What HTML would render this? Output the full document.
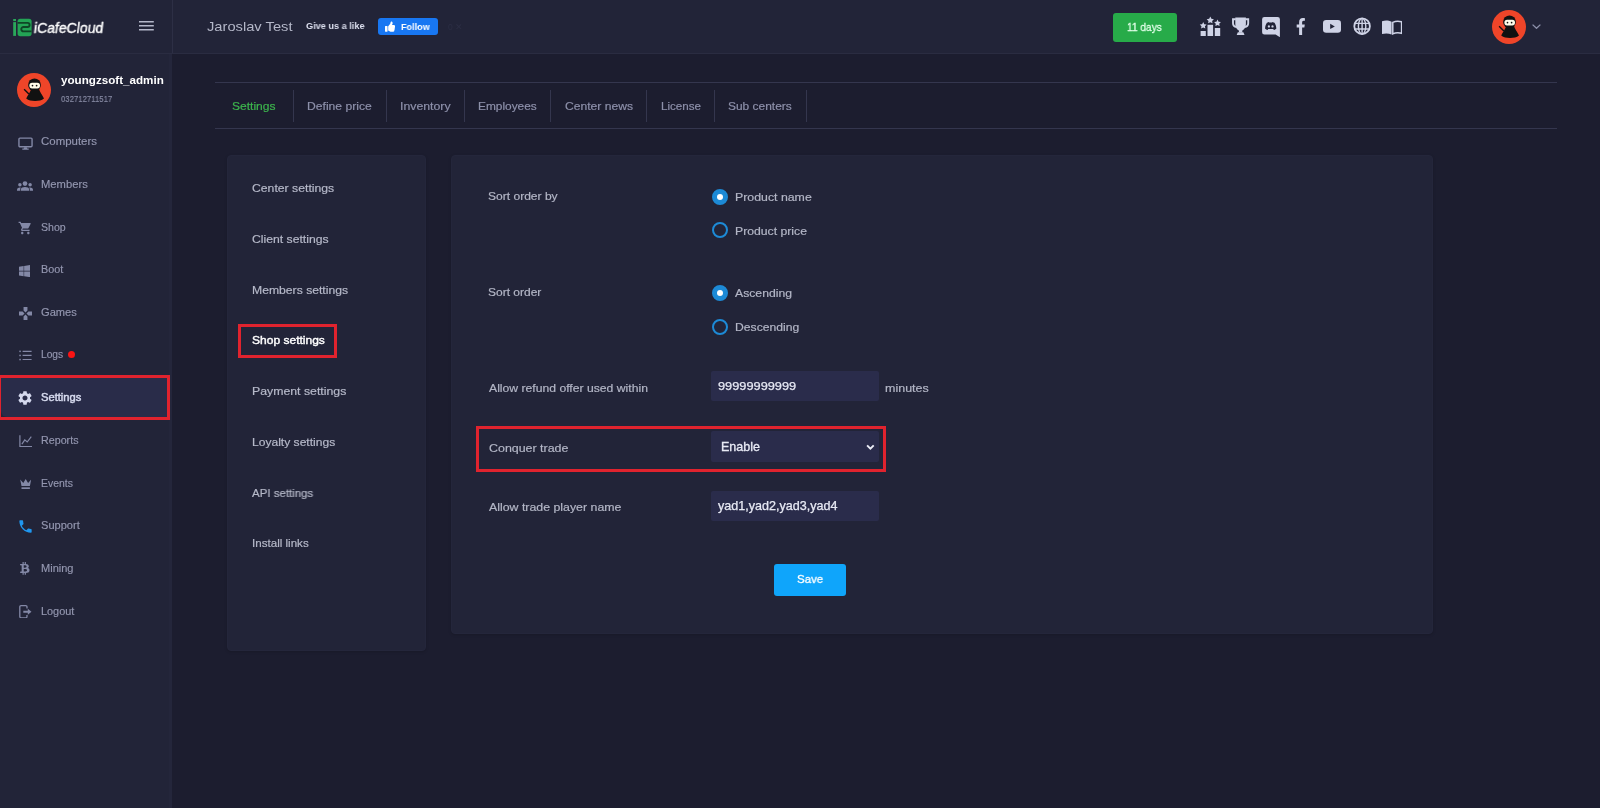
<!DOCTYPE html>
<html lang="en">
<head>
<meta charset="utf-8">
<title>iCafeCloud - Shop settings</title>
<style>
*{box-sizing:border-box;margin:0;padding:0}
html,body{width:1600px;height:808px;overflow:hidden}
body{background:#1c1d2f;font-family:"Liberation Sans",sans-serif;color:#b3b6c6;font-size:12px;position:relative}
.abs{position:absolute}
.t{position:absolute;white-space:nowrap;line-height:normal;transform-origin:0 50%;display:block;will-change:transform}
header{position:absolute;left:0;top:0;width:1600px;height:54px;background:#222438;border-bottom:1px solid #2a2c41}
main{position:absolute;left:0;top:0;width:0;height:0}
ul{list-style:none}
aside{position:absolute;left:0;top:0;width:172px;height:808px;background:#222438;border-right:3px solid #24263b}
.panel{position:absolute;background:#222438;border-radius:4px;box-shadow:0 1px 3px rgba(0,0,0,.15);border:1px solid #24263b}
.hl{position:absolute;border:3px solid #e0232e}
.inp{position:absolute;background:#2a2c4b;border-radius:2px}
.rad{position:absolute;width:16px;height:16px;border-radius:50%;border:2px solid #1d8ad6}
.rad.on{background:#1d8ad6}
.rad.on::after{content:"";position:absolute;left:3px;top:3px;width:6px;height:6px;border-radius:50%;background:#fff}
.sep{position:absolute;width:1px;background:#34364e;top:90px;height:32px}
</style>
</head>
<body>
<aside>
<div id="user"><svg class="abs" style="left:17.299999999999997px;top:73px" width="34" height="34" viewBox="0 0 34 34" ><circle cx="17" cy="17" r="17" fill="#ef4529"/><path d="M7.100 16.300l4.800 4.600" stroke="#111" stroke-width="1.400"/><circle cx="17.500" cy="11.900" r="6.400" fill="#111"/><path d="M14.300 15.500C13.800 18.500 11 21.500 9.200 25.600 11.500 27.400 14.500 28 18.100 28S24.700 27.400 27 25.600C25.200 21.500 22.400 18.500 21.900 15.500z" fill="#111"/><rect x="12.400" y="9.700" width="10.600" height="5.700" rx="2.700" fill="#fffbe8"/><circle cx="15.500" cy="12.600" r=".85" fill="#111"/><circle cx="19.600" cy="12.600" r=".85" fill="#111"/></svg><span class="t" style="left:61.25px;top:74px;font-size:11.2px;color:#ffffff;transform:scaleX(1.0397);font-weight:700">youngzsoft_admin</span><span class="t" style="left:61.25px;top:93px;font-size:9.6px;color:#878aa3;transform:scaleX(0.8093);-webkit-text-stroke:0.2px #878aa3">032712711517</span></div>
<div class="abs" style="left:1px;top:378px;width:166px;height:39px;background:#292c49;border-radius:0 0 0 6px"></div>
<ul id="menu"><li><svg class="abs" style="left:17.5px;top:136.5px" width="15" height="13" viewBox="0 0 15 13" ><rect x=".950" y="1.100" width="13.100" height="8.700" rx="1" fill="none" stroke="#8388a6" stroke-width="1.400"/><path fill="#8388a6" d="M6.300 10.300h2.400l.500 1.300h1.500v1.100H4.300v-1.100h1.500z"/></svg><span class="t" style="left:41.25px;top:136px;font-size:10.2px;color:#9497b0;transform:scaleX(1.1239);-webkit-text-stroke:0.15px #9497b0">Computers</span></li><li><svg class="abs" style="left:17px;top:180.8px" width="16" height="10" viewBox="0 0 16 10" ><g fill="#8388a6"><circle cx="8" cy="2.600" r="2.350"/><circle cx="2.900" cy="3.700" r="1.750"/><circle cx="13.100" cy="3.700" r="1.750"/><path d="M3.900 9.800V8.600C3.900 7.500 4.500 6.800 5.300 6.500 6.100 6.100 7 5.900 8 5.900s1.900.200 2.700.600c.800.300 1.400 1 1.400 2.100V9.800z"/><path d="M0 9.800V8.700C0 7.900.400 7.300 1 7c.600-.300 1.200-.500 1.900-.500.300 0 .600 0 .900.100-.400.600-.600 1.300-.600 2V9.800z"/><path d="M16 9.800V8.700c0-.800-.400-1.400-1-1.700-.600-.300-1.200-.500-1.900-.500-.300 0-.600 0-.900.100.400.600.600 1.300.600 2V9.800z"/></g></svg><span class="t" style="left:41.25px;top:179px;font-size:10.2px;color:#9497b0;transform:scaleX(1.1008);-webkit-text-stroke:0.15px #9497b0">Members</span></li><li><svg class="abs" style="left:17.5px;top:221.3px" width="14.6" height="13.8" viewBox="0 1 24 22" preserveAspectRatio="none"><path fill="#8388a6" d="M7 18c-1.100 0-1.990.900-1.990 2S5.900 22 7 22s2-.900 2-2-.900-2-2-2zM1 2v2h2l3.600 7.590-1.350 2.450c-.160.280-.250.610-.250.960 0 1.100.900 2 2 2h12v-2H7.420c-.140 0-.250-.110-.250-.250l.030-.120.900-1.630h7.450c.750 0 1.410-.410 1.750-1.030l3.580-6.490c.080-.140.120-.310.120-.480 0-.550-.450-1-1-1H5.210l-.940-2H1zm16 16c-1.100 0-1.990.900-1.990 2s.890 2 1.990 2 2-.900 2-2-.900-2-2-2z"/></svg><span class="t" style="left:41.25px;top:222px;font-size:10.2px;color:#9497b0;transform:scaleX(1.0401);-webkit-text-stroke:0.15px #9497b0">Shop</span></li><li><svg class="abs" style="left:19px;top:264.7px" width="11.3" height="12.2" viewBox="0 32 448 448" preserveAspectRatio="none"><path fill="#8388a6" d="M0 93.700l183.600-25.300v177.400H0V93.700zm0 324.600l183.600 25.300V268.400H0v149.900zm203.800 28L448 480V268.400H203.800v177.900zm0-380.600v180.100H448V32L203.800 65.700z"/></svg><span class="t" style="left:41.25px;top:264px;font-size:10.2px;color:#9497b0;transform:scaleX(1.0611);-webkit-text-stroke:0.15px #9497b0">Boot</span></li><li><svg class="abs" style="left:18.7px;top:306.8px" width="13" height="13" viewBox="2 2 20 20" ><path fill="#8388a6" d="M15 7.500V2H9v5.500l3 3 3-3zM7.500 9H2v6h5.500l3-3-3-3zM9 16.500V22h6v-5.500l-3-3-3 3zM16.500 9l-3 3 3 3H22V9h-5.500z"/></svg><span class="t" style="left:41.25px;top:307px;font-size:10.2px;color:#9497b0;transform:scaleX(1.0915);-webkit-text-stroke:0.15px #9497b0">Games</span></li><li><svg class="abs" style="left:18.5px;top:349.9px" width="13" height="11" viewBox="0 0 13 11" ><g stroke="#8388a6" stroke-width="1.200" fill="none"><path d="M3.600 1.300h9M3.600 5.400h9M3.600 9.500h9"/></g><g fill="#8388a6"><rect x=".300" y=".600" width="1.500" height="1.500"/><rect x=".300" y="4.700" width="1.500" height="1.500"/><rect x=".300" y="8.800" width="1.500" height="1.500"/></g></svg><span class="t" style="left:41.25px;top:349px;font-size:10.2px;color:#9497b0;transform:scaleX(1.0025);-webkit-text-stroke:0.15px #9497b0">Logs</span></li><li><svg class="abs" style="left:18.2px;top:391.2px" width="14" height="14" viewBox="2 2 20 20" ><path fill="#d5d9ee" d="M19.140 12.940c.040-.300.060-.610.060-.940 0-.320-.020-.640-.070-.940l2.030-1.580c.180-.140.230-.410.120-.610l-1.920-3.320c-.120-.220-.370-.290-.590-.220l-2.390.960c-.500-.380-1.030-.700-1.620-.940l-.360-2.540c-.040-.240-.240-.410-.480-.410h-3.840c-.240 0-.430.170-.470.410l-.360 2.540c-.590.240-1.130.570-1.620.940l-2.390-.960c-.220-.080-.470 0-.590.220L2.740 8.870c-.120.210-.080.470.120.610l2.030 1.580c-.050.300-.090.630-.090.940s.020.640.070.940l-2.030 1.580c-.180.140-.230.410-.120.610l1.920 3.320c.120.220.370.290.590.220l2.390-.960c.500.380 1.030.700 1.620.940l.360 2.540c.050.240.240.410.480.410h3.840c.240 0 .440-.170.470-.410l.360-2.540c.590-.240 1.130-.560 1.620-.940l2.390.960c.220.080.470 0 .590-.220l1.920-3.320c.120-.220.070-.470-.120-.610l-2.010-1.580zM12 15.600c-1.980 0-3.600-1.620-3.600-3.600s1.620-3.600 3.600-3.600 3.600 1.620 3.600 3.600-1.620 3.600-3.600 3.600z"/></svg><span class="t" style="left:41.25px;top:392px;font-size:10.2px;color:#d6daee;transform:scaleX(1.0961);-webkit-text-stroke:0.45px #d6daee">Settings</span></li><li><svg class="abs" style="left:18.5px;top:434.5px" width="13.5" height="12.5" viewBox="0 0 13.500 12.500" ><g fill="none" stroke="#8388a6" stroke-width="1.200"><path d="M.900 .300V11.700H13.200"/><path d="M2.900 9.200L5.800 4.900 8.200 7 12.300 1.700"/></g></svg><span class="t" style="left:41.25px;top:435px;font-size:10.2px;color:#9497b0;transform:scaleX(1.0512);-webkit-text-stroke:0.15px #9497b0">Reports</span></li><li><svg class="abs" style="left:19.5px;top:478.5px" width="11.5" height="10.5" viewBox="0 0 11.500 10.500" ><g fill="#8388a6"><path d="M.200 .600L3.300 3.900 5.700 .100 8.100 3.900 11.200 .600 9.900 7.100H1.500z"/><rect x="1.500" y="8.300" width="8.400" height="1.700"/></g></svg><span class="t" style="left:41.25px;top:478px;font-size:10.2px;color:#9497b0;transform:scaleX(1.0223);-webkit-text-stroke:0.15px #9497b0">Events</span></li><li><svg class="abs" style="left:18.5px;top:519.8px" width="13" height="13" viewBox="2.500 2.500 19 19" ><path fill="#1f96ef" d="M6.620 10.790c1.440 2.830 3.760 5.140 6.590 6.590l2.200-2.200c.270-.270.670-.360 1.020-.240 1.120.370 2.330.570 3.570.570.550 0 1 .450 1 1V20c0 .550-.450 1-1 1-9.390 0-17-7.610-17-17 0-.550.450-1 1-1h3.500c.550 0 1 .450 1 1 0 1.250.200 2.450.570 3.570.110.350.030.740-.250 1.020l-2.200 2.200z"/></svg><span class="t" style="left:41.25px;top:520px;font-size:10.2px;color:#9497b0;transform:scaleX(1.0858);-webkit-text-stroke:0.15px #9497b0">Support</span></li><li><svg class="abs" style="left:20.2px;top:562.4px" width="9.6" height="12.7" viewBox="0 0 384 512" preserveAspectRatio="none"><path fill="#8388a6" d="M310.204 242.638c27.730-14.180 45.377-39.390 41.280-81.300-5.358-57.351-52.458-76.573-114.850-81.929V0h-48.528l-.001 77.203c-12.605 0-25.525.315-38.444.630V0h-48.528v79.409c-17.842.539-38.622.276-97.370 0v51.678c38.314-.678 58.417-3.140 63.023 21.427v217.429c-2.925 19.492-18.524 16.685-53.255 16.071L3.765 443.680c88.481 0 97.370.315 97.370.315V512h48.528v-67.060c13.234.315 26.154.315 38.444.315L188.105 512h48.528v-68.005c81.299-4.412 135.647-24.894 142.895-101.467 5.671-61.446-23.320-88.862-69.324-99.890zM150.608 134.553c27.415 0 113.126-8.507 113.126 48.528 0 54.515-85.710 48.212-113.126 48.212v-96.740zm0 251.776V279.821c32.772 0 133.127-9.138 133.127 53.255-.001 60.186-100.355 53.253-133.127 53.253z"/></svg><span class="t" style="left:41.25px;top:563px;font-size:10.2px;color:#9497b0;transform:scaleX(1.0828);-webkit-text-stroke:0.15px #9497b0">Mining</span></li><li><svg class="abs" style="left:18.7px;top:604.7px" width="13" height="13.5" viewBox="0 0 13 13.500" ><path d="M8 3.400V1.900a1.200 1.200 0 0 0-1.200-1.200H2a1.200 1.200 0 0 0-1.200 1.200v9.700a1.200 1.200 0 0 0 1.200 1.200h4.800a1.200 1.200 0 0 0 1.200-1.200v-1.500" fill="none" stroke="#8388a6" stroke-width="1.300"/><path fill="#8388a6" d="M4.300 5.700h4.500V3.800l3.700 2.950-3.700 2.950V7.800H4.300z"/></svg><span class="t" style="left:41.25px;top:606px;font-size:10.2px;color:#9497b0;transform:scaleX(1.0699);-webkit-text-stroke:0.15px #9497b0">Logout</span></li></ul>
<i class="abs" style="left:68px;top:351px;width:7px;height:7px;border-radius:50%;background:#fb1414"></i>
<div class="hl" style="left:0;top:375px;width:170px;height:45px;border-left-width:1px"></div>
</aside>

<header>
<i class="abs" style="left:172px;top:0;width:1px;height:53px;background:#2d2f45"></i>
<div id="brand"><svg class="abs" style="left:12px;top:17px" width="21" height="21" viewBox="12 17 21 21" ><rect x="13.2" y="19" width="2.8" height="2.1" fill="#2aa85a"/><rect x="13.2" y="22.1" width="2.8" height="13.8" fill="#2aa85a"/><rect x="17.6" y="18.7" width="14" height="17.5" rx="2.6" fill="#23a455"/><path d="M17.6 22.9H27.6a2 2 0 0 1 2 2v0.1a2 2 0 0 1-2 2H23.4a2.1 2.1 0 0 0-2.1 2.1v0.2a2.1 2.1 0 0 0 2.1 2.1H31.6" fill="none" stroke="#0f4526" stroke-width="1.9"/></svg><span class="t" style="left:33.90px;top:20px;font-size:14.2px;color:#ffffff;transform:skewX(-7deg) scaleX(0.9886);-webkit-text-stroke:0.35px #ffffff">iCafeCloud</span><svg class="abs" style="left:139px;top:20px" width="15" height="12" viewBox="0 0 15 12" ><path d="M0 1.7h14.8M0 5.7h14.8M0 9.7h14.8" stroke="#b4b7c9" stroke-width="1.5"/></svg></div>
<div id="topbar">
<span class="t" style="left:206.50px;top:19px;font-size:13.3px;color:#b4b7c8;transform:scaleX(1.1052)">Jaroslav Test</span><span class="t" style="left:305.80px;top:20px;font-size:9.5px;color:#dcdfee;transform:scaleX(0.9632);font-weight:700">Give us a like</span>
<a class="abs" style="left:378px;top:18px;width:60px;height:17px;background:#1877f2;border-radius:3px"></a><svg class="abs" style="left:384.5px;top:20.6px" width="10.2" height="11.4" viewBox="0 0 512 512" ><path fill="#fff" d="M104 224H24c-13.255 0-24 10.745-24 24v240c0 13.255 10.745 24 24 24h80c13.255 0 24-10.745 24-24V248c0-13.255-10.745-24-24-24zM384 81.452c0 42.416-25.970 66.208-33.277 94.548h101.723c33.397 0 59.397 27.746 59.553 58.098.084 17.938-7.546 37.249-19.439 49.197l-.11.110c9.836 23.337 8.237 56.037-9.308 79.469 8.681 25.895-.069 57.704-16.382 74.757 4.298 17.598 2.244 32.575-6.148 44.632C440.202 511.587 389.616 512 346.839 512l-2.845-.001c-48.287-.017-87.806-17.598-119.560-31.725-15.957-7.099-36.821-15.887-52.651-16.178-6.540-.120-11.783-5.457-11.783-11.998v-213.770c0-3.200 1.282-6.271 3.558-8.521 39.614-39.144 56.648-80.587 89.117-113.111 14.804-14.832 20.188-37.236 25.393-58.902C282.515 39.293 291.817 0 312 0c24 0 72 8 72 81.452z"/></svg><span class="t" style="left:400.70px;top:21px;font-size:9.6px;color:#ffffff;transform:scaleX(0.9449);font-weight:700">Follow</span>
<span class="t" style="left:448px;top:22px;font-size:8.500px;color:#2c2e44">0 &#10005;</span>
<a class="abs" style="left:1113px;top:13px;width:64px;height:29px;background:#27ab49;border-radius:3px"></a><span class="t" style="left:1127.20px;top:21px;font-size:11.4px;color:#e2ffe9;transform:scaleX(0.8909);-webkit-text-stroke:0.3px #e2ffe9">11 days</span>
<svg class="abs" style="left:1199px;top:16px" width="23" height="21" viewBox="1199 16 23 21" ><g fill="#cfd3e6"><rect x="1200.6" y="31" width="5.2" height="5"/><rect x="1207.5" y="24.8" width="5.6" height="11.2"/><rect x="1214.8" y="28" width="5.4" height="8"/><polygon points="1203.20,22.00 1204.26,24.14 1206.62,24.49 1204.91,26.16 1205.32,28.51 1203.20,27.40 1201.08,28.51 1201.49,26.16 1199.78,24.49 1202.14,24.14"/><polygon points="1210.30,16.50 1211.42,18.76 1213.91,19.13 1212.11,20.89 1212.53,23.37 1210.30,22.20 1208.07,23.37 1208.49,20.89 1206.69,19.13 1209.18,18.76"/><polygon points="1217.50,19.60 1218.56,21.74 1220.92,22.09 1219.21,23.76 1219.62,26.11 1217.50,25.00 1215.38,26.11 1215.79,23.76 1214.08,22.09 1216.44,21.74"/></g></svg><svg class="abs" style="left:1231px;top:17px" width="19.5" height="18.5" viewBox="1231 17 19.5 18.5" ><g fill="#cfd3e6"><path d="M1235.300 17.600H1245.900V23.800C1245.900 27.800 1243.600 29.900 1242.300 30.600V32.500H1238.900V30.600C1237.600 29.900 1235.300 27.800 1235.300 23.800z"/><path d="M1237.800 32.300H1243.400L1244.500 35H1236.700z"/></g><g fill="none" stroke="#cfd3e6" stroke-width="1.900"><path d="M1235.800 19.200H1233V23.200C1233 25.400 1234.600 26.700 1236.700 27.100"/><path d="M1245.400 19.200H1248.200V23.200C1248.200 25.400 1246.600 26.700 1244.500 27.100"/></g></svg><svg class="abs" style="left:1262px;top:16.5px" width="18.5" height="20.5" viewBox="0 0 18.5 20.5" ><path fill="#cfd3e6" d="M2.4 0H15.6a2.3 2.3 0 0 1 2.3 2.3V20.2L13.6 17.6H2.4A2.3 2.3 0 0 1 .1 15.3V2.3A2.3 2.3 0 0 1 2.4 0z"/><path fill="#222438" d="M4.900 5.700c1.100-.5 2-.7 2-.7l.3.600h3l.3-.600s.9.200 2 .700c1 1.400 1.900 3.700 1.800 6-1 1-2.400 1.200-2.400 1.200l-.7-1H6.200l-.7 1s-1.400-.200-2.400-1.200c-.1-2.300.8-4.600 1.800-6z"/><ellipse cx="6.900" cy="9.400" rx="1.050" ry="1.200" fill="#cfd3e6"/><ellipse cx="10.500" cy="9.400" rx="1.050" ry="1.200" fill="#cfd3e6"/></svg><svg class="abs" style="left:1296px;top:17.7px" width="9.6" height="17" viewBox="0 0 320 512" preserveAspectRatio="none"><path fill="#cfd3e6" d="M279.14 288l14.220-92.660h-88.910v-60.130c0-25.350 12.420-50.060 52.240-50.060h40.420V6.260S260.430 0 225.360 0c-73.220 0-121.080 44.380-121.080 124.720v70.620H22.890V288h81.390v224h100.170V288z"/></svg><svg class="abs" style="left:1322.5px;top:20.1px" width="18" height="12.8" viewBox="0 0 18 12.8" ><rect width="18" height="12.8" rx="3.2" fill="#cfd3e6"/><path d="M7.2 3.7v5.4l4.600-2.700z" fill="#222438"/></svg><svg class="abs" style="left:1352.5px;top:17.4px" width="18" height="18.4" viewBox="0 0 18 18.400" ><g fill="none" stroke="#cfd3e6"><circle cx="9.100" cy="9.200" r="7.800" stroke-width="1.800"/><g stroke-width="1.400"><ellipse cx="9.100" cy="9.200" rx="3.700" ry="7.800"/><path d="M2 6.400h14.200M2 12h14.200M9.100 1.400v15.600"/></g></g></svg><svg class="abs" style="left:1382px;top:19.8px" width="20.4" height="15" viewBox="0 0 20.4 15" ><path fill="#cfd3e6" d="M0 1.200C3 .2 6.800 .3 9.600 1.800V14.600C6.800 13.200 3 13.100 0 14.100z"/><path fill="none" stroke="#cfd3e6" stroke-width="1.5" d="M10.800 2.300C13.300 1.100 16.700 .9 19.600 1.800V13.300C16.700 12.500 13.300 12.700 10.800 13.900z"/></svg>
<svg class="abs" style="left:1492px;top:9.600000000000001px" width="34" height="34" viewBox="0 0 34 34" ><circle cx="17" cy="17" r="17" fill="#ef4529"/><path d="M7.100 16.300l4.800 4.600" stroke="#111" stroke-width="1.400"/><circle cx="17.500" cy="11.900" r="6.400" fill="#111"/><path d="M14.300 15.500C13.800 18.500 11 21.500 9.200 25.600 11.500 27.400 14.500 28 18.100 28S24.700 27.400 27 25.600C25.200 21.500 22.400 18.500 21.900 15.500z" fill="#111"/><rect x="12.400" y="9.700" width="10.600" height="5.700" rx="2.700" fill="#fffbe8"/><circle cx="15.500" cy="12.600" r=".85" fill="#111"/><circle cx="19.600" cy="12.600" r=".85" fill="#111"/></svg><svg class="abs" style="left:1532.3px;top:23.8px" width="9" height="5.5" viewBox="0 0 9 5.500" ><path d="M.600 .600L4.500 4.300 8.400 .600" fill="none" stroke="#8d91ab" stroke-width="1.300"/></svg>
</div>
</header>

<main>
<nav id="tabbar">
<i class="abs" style="left:215px;top:82px;width:1342px;height:1px;background:#34364e"></i>
<i class="abs" style="left:215px;top:128px;width:1342px;height:1px;background:#34364e"></i>
<ul id="tabs"><li><span class="t" style="left:231.50px;top:99px;font-size:11.6px;color:#3db54d;transform:scaleX(1.0380);-webkit-text-stroke:0.2px #3db54d">Settings</span></li><li><span class="t" style="left:307.25px;top:99px;font-size:11.6px;color:#8d90aa;transform:scaleX(1.0465);-webkit-text-stroke:0.2px #8d90aa">Define price</span></li><li><span class="t" style="left:399.70px;top:99px;font-size:11.6px;color:#8d90aa;transform:scaleX(1.0607);-webkit-text-stroke:0.2px #8d90aa">Inventory</span></li><li><span class="t" style="left:478.00px;top:99px;font-size:11.6px;color:#8d90aa;transform:scaleX(1.0242);-webkit-text-stroke:0.2px #8d90aa">Employees</span></li><li><span class="t" style="left:564.50px;top:99px;font-size:11.6px;color:#8d90aa;transform:scaleX(1.0446);-webkit-text-stroke:0.2px #8d90aa">Center news</span></li><li><span class="t" style="left:660.50px;top:99px;font-size:11.6px;color:#8d90aa;transform:scaleX(1.0008);-webkit-text-stroke:0.2px #8d90aa">License</span></li><li><span class="t" style="left:728.00px;top:99px;font-size:11.6px;color:#8d90aa;transform:scaleX(1.0303);-webkit-text-stroke:0.2px #8d90aa">Sub centers</span></li></ul><i class="sep" style="left:293px"></i><i class="sep" style="left:386px"></i><i class="sep" style="left:464px"></i><i class="sep" style="left:550px"></i><i class="sep" style="left:646px"></i><i class="sep" style="left:714px"></i><i class="sep" style="left:806px"></i>
</nav>

<section class="panel" style="left:227px;top:155px;width:199px;height:496px"></section>
<ul id="submenu"><li><span class="t" style="left:252.40px;top:181px;font-size:11.6px;color:#b6b9c9;transform:scaleX(1.0541);-webkit-text-stroke:0.2px #b6b9c9">Center settings</span></li><li><span class="t" style="left:252.40px;top:232px;font-size:11.6px;color:#b6b9c9;transform:scaleX(1.0518);-webkit-text-stroke:0.2px #b6b9c9">Client settings</span></li><li><span class="t" style="left:252.40px;top:283px;font-size:11.6px;color:#b6b9c9;transform:scaleX(1.0503);-webkit-text-stroke:0.2px #b6b9c9">Members settings</span></li><li><span class="t" style="left:252.40px;top:333px;font-size:11.6px;color:#ffffff;transform:scaleX(1.0375);-webkit-text-stroke:0.4px #ffffff">Shop settings</span></li><li><span class="t" style="left:252.40px;top:384px;font-size:11.6px;color:#b6b9c9;transform:scaleX(1.0603);-webkit-text-stroke:0.2px #b6b9c9">Payment settings</span></li><li><span class="t" style="left:252.40px;top:435px;font-size:11.6px;color:#b6b9c9;transform:scaleX(1.0410);-webkit-text-stroke:0.2px #b6b9c9">Loyalty settings</span></li><li><span class="t" style="left:252.40px;top:486px;font-size:11.6px;color:#b6b9c9;transform:scaleX(0.9891);-webkit-text-stroke:0.2px #b6b9c9">API settings</span></li><li><span class="t" style="left:252.40px;top:536px;font-size:11.6px;color:#b6b9c9;transform:scaleX(0.9999);-webkit-text-stroke:0.2px #b6b9c9">Install links</span></li></ul>
<div class="hl" style="left:238px;top:324px;width:99px;height:34px"></div>

<section class="panel" style="left:451px;top:155px;width:982px;height:479px"></section>
<form id="shop">
<span class="t" style="left:488.40px;top:189px;font-size:11.6px;color:#b3b6c6;transform:scaleX(1.0386);-webkit-text-stroke:0.2px #b3b6c6">Sort order by</span><i class="rad on" style="left:712px;top:189px"></i><span class="t" style="left:735.00px;top:190px;font-size:11.6px;color:#b3b6c6;transform:scaleX(1.0632);-webkit-text-stroke:0.2px #b3b6c6">Product name</span><i class="rad" style="left:712px;top:222.400px"></i><span class="t" style="left:735.00px;top:224px;font-size:11.6px;color:#b3b6c6;transform:scaleX(1.0540);-webkit-text-stroke:0.2px #b3b6c6">Product price</span>
<span class="t" style="left:488.40px;top:285px;font-size:11.6px;color:#b3b6c6;transform:scaleX(1.0347);-webkit-text-stroke:0.2px #b3b6c6">Sort order</span><i class="rad on" style="left:712px;top:285px"></i><span class="t" style="left:735.00px;top:286px;font-size:11.6px;color:#b3b6c6;transform:scaleX(1.0525);-webkit-text-stroke:0.2px #b3b6c6">Ascending</span><i class="rad" style="left:712px;top:318.600px"></i><span class="t" style="left:735.00px;top:320px;font-size:11.6px;color:#b3b6c6;transform:scaleX(1.0492);-webkit-text-stroke:0.2px #b3b6c6">Descending</span>
<span class="t" style="left:488.60px;top:381px;font-size:11.6px;color:#b3b6c6;transform:scaleX(1.0507);-webkit-text-stroke:0.2px #b3b6c6">Allow refund offer used within</span><div class="inp" style="left:711px;top:371px;width:168px;height:30px"></div><span class="t" style="left:717.80px;top:379px;font-size:11.6px;color:#e8eaf5;transform:scaleX(1.1024);-webkit-text-stroke:0.25px #e8eaf5">99999999999</span><span class="t" style="left:885.00px;top:381px;font-size:11.6px;color:#b3b6c6;transform:scaleX(1.0773);-webkit-text-stroke:0.2px #b3b6c6">minutes</span>
<span class="t" style="left:488.60px;top:441px;font-size:11.6px;color:#b3b6c6;transform:scaleX(1.0712);-webkit-text-stroke:0.2px #b3b6c6">Conquer trade</span><div class="inp" style="left:711px;top:431px;width:168px;height:31px"></div><span class="t" style="left:721.00px;top:440px;font-size:12.2px;color:#e8eaf5;transform:scaleX(1.0276);-webkit-text-stroke:0.3px #e8eaf5">Enable</span><svg class="abs" style="left:865.8px;top:443.6px" width="9" height="7" viewBox="0 0 9 7" ><path d="M1.100 1.300l3.300 3.300 3.300-3.300" fill="none" stroke="#eceef7" stroke-width="1.900"/></svg>
<div class="hl" style="left:476px;top:426px;width:410px;height:46px"></div>
<span class="t" style="left:488.60px;top:500px;font-size:11.6px;color:#b3b6c6;transform:scaleX(1.0645);-webkit-text-stroke:0.2px #b3b6c6">Allow trade player name</span><div class="inp" style="left:711px;top:491px;width:168px;height:30px"></div><span class="t" style="left:717.80px;top:499px;font-size:11.9px;color:#e8eaf5;transform:scaleX(1.0561);-webkit-text-stroke:0.25px #e8eaf5">yad1,yad2,yad3,yad4</span>
<a class="abs" style="left:774px;top:564px;width:72px;height:32px;background:#0fa5fb;border-radius:3px"></a><span class="t" style="left:796.90px;top:572px;font-size:11.6px;color:#ffffff;transform:scaleX(0.9872);-webkit-text-stroke:0.3px #ffffff">Save</span>
</form>
</main>
</body>
</html>
